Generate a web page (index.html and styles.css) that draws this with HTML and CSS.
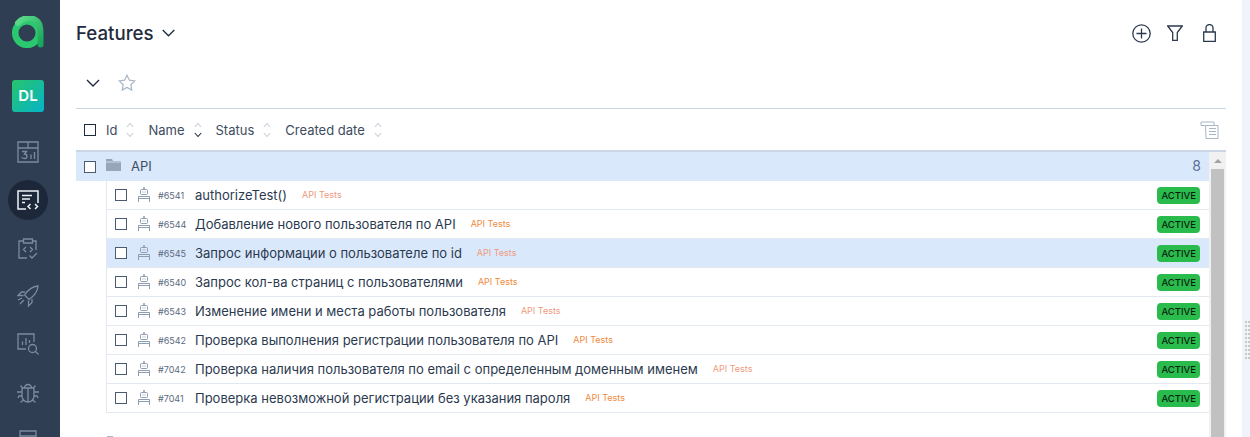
FILE: index.html
```html
<!DOCTYPE html>
<html lang="en">
<head>
    <meta charset="UTF-8">
    <title>Features</title>
    <link rel="stylesheet" href="styles.css">
</head>
<body>
    <svg class="defs" width="0" height="0">
        <symbol id="robot" viewBox="0 0 12 15">
            <circle cx="6" cy="1" r="1" fill="currentColor"/>
            <path d="M3.500 2.500h5a1 1 0 0 1 1 1v3a1 1 0 0 1-1 1h-5a1 1 0 0 1-1-1v-3a1 1 0 0 1 1-1zM4.500 5h1M6.500 5h1M.5 15v-5.500h11V15M.5 11.500h11" fill="none" stroke="currentColor"/>
        </symbol>
        <symbol id="sort" viewBox="0 0 8 20">
            <path d="M.8 7 4 3.500 7.200 7M.8 13 4 16.500 7.200 13" fill="none" stroke="currentColor" stroke-width="1.100"/>
        </symbol>
    </svg>

    <aside class="sidebar">
        <svg class="logo" width="32" height="32" viewBox="0 0 32 32">
            <defs>
                <linearGradient id="logoGrad" x1="0" y1="0" x2="1" y2="1">
                    <stop offset="0" stop-color="#5fdc8c"/>
                    <stop offset="1" stop-color="#17a65a"/>
                </linearGradient>
            </defs>
            <circle cx="15" cy="17" r="11.800" fill="none" stroke="#2bc96f" stroke-width="6.500"/>
            <path d="M6 7C10 2 19 0 25 5 29.500 9 28.500 18 28.500 28.500" fill="none" stroke="url(#logoGrad)" stroke-width="6" stroke-linecap="round"/>
        </svg>
        <div class="avatar">DL</div>
        <nav class="nav">
            <a class="nav-item">
                <svg width="22" height="22" viewBox="0 0 22 22" fill="none" stroke="currentColor" stroke-width="1.300">
                    <path d="M1 1h20v20H1zM1 7h20M11 1v6M5 10.500h4.500L7.500 13c1.800 0 2.500 1 2.500 2.200S9 17.500 7.500 17.500 5 16.800 4.500 16M14 13.500v4.500M17.500 11v7"/>
                </svg>
            </a>
            <a class="nav-item active">
                <svg width="22" height="20" viewBox="0 0 22 20" fill="none" stroke="currentColor" stroke-width="1.500">
                    <path d="M9 19H1V1h20v12M5 5.500h10M5 9h8M5 12.500h3M13.500 14l-2.500 2.500 2.500 2.500M18 14l2.500 2.500-2.500 2.500"/>
                </svg>
            </a>
            <a class="nav-item">
                <svg width="20" height="21" viewBox="0 0 20 21" fill="none" stroke="currentColor" stroke-width="1.300">
                    <path d="M5.500 3H1v17h8M14.500 3H18v9M5.500 1h9v4h-9zM8 9 5.500 11.500 8 14M12 9l2.500 2.500L12 14M11.500 17.500l2.500 2.500 5-5"/>
                </svg>
            </a>
            <a class="nav-item">
                <svg width="22" height="22" viewBox="0 0 22 22" fill="none" stroke="currentColor" stroke-width="1.300">
                    <path d="M21 1c-6 .5-9.500 3-13.500 9l4.500 4.500c6-4 8.500-7.500 9-13.500zM8 7H4.500L1 10.500h5.500M15 14v3.500L11.500 21v-5.500M1 15l4-2M3 19l4-4"/>
                </svg>
            </a>
            <a class="nav-item">
                <svg width="22" height="22" viewBox="0 0 22 22" fill="none" stroke="currentColor" stroke-width="1.300">
                    <path d="M9 16H1V1h16v8M5.500 12V8.500M9 12V5M12.500 10V7M18.500 18.500 21.500 21.500"/>
                    <circle cx="15.500" cy="15.500" r="4"/>
                </svg>
            </a>
            <a class="nav-item">
                <svg width="22" height="22" viewBox="0 0 22 22" fill="none" stroke="currentColor" stroke-width="1.300">
                    <path d="M6 7h10a1 1 0 0 1 1 1v7a6 6 0 0 1-12 0V8a1 1 0 0 1 1-1zM7.500 7a3.500 3.500 0 0 1 7 0M11 7v14M5 11H0M17 11h5M5 15H2l-1 2M17 15h3l1 2M6.500 19l-3 2.500M15.500 19l3 2.500M6 7.500 3.500 4.500M16 7.500l2.500-3"/>
                </svg>
            </a>
            <a class="nav-item">
                <svg width="18" height="20" viewBox="0 0 18 20" fill="none" stroke="currentColor" stroke-width="1.300">
                    <path d="M1 1h16v5H1zM1 6v13h16V6"/>
                </svg>
            </a>
        </nav>
    </aside>

    <main class="main">
        <header class="topbar">
            <h1 class="title">Features
                <svg width="13" height="8" viewBox="0 0 13 8"><path d="M.7 1l5.800 5.800L12.300 1" fill="none" stroke="#1f2b3d" stroke-width="1.300"/></svg>
            </h1>
            <div class="actions">
                <svg width="19" height="19" viewBox="0 0 19 19" fill="none" stroke="#2c3a4f" stroke-width="1.300">
                    <circle cx="9.500" cy="9.500" r="8.700"/><path d="M9.500 4.500v10M4.500 9.500h10"/>
                </svg>
                <svg width="16" height="16" viewBox="0 0 16 16" fill="none" stroke="#2c3a4f" stroke-width="1.300">
                    <path d="M.7 1h14.600l-5 6.500v7.800H5.700V7.500z"/>
                </svg>
                <svg class="lock" width="13" height="18" viewBox="0 0 13 18" fill="none" stroke="#2c3a4f" stroke-width="1.300">
                    <path d="M.7 8h11.600v9.300H.7zM3 8V4a3.500 3.500 0 0 1 7 0v4"/>
                </svg>
            </div>
        </header>

        <div class="toolbar">
            <svg width="14" height="8" viewBox="0 0 14 8"><path d="M1 1l6 6 6-6" fill="none" stroke="#1f2b3d" stroke-width="1.400"/></svg>
            <svg width="18" height="18" viewBox="0 0 18 18"><path d="M9 1.200l2.400 5 5.400.7-4 3.800 1 5.400L9 13.500l-4.800 2.600 1-5.400-4-3.800 5.400-.7z" fill="none" stroke="#a9b6c8" stroke-width="1.200"/></svg>
        </div>

        <div class="columns">
            <span class="check dark"></span>
            <span class="col first">Id <svg class="sort" width="8" height="20"><use href="#sort"/></svg></span>
            <span class="col">Name
                <svg class="sort" width="8" height="20" viewBox="0 0 8 20" fill="none" stroke-width="1.100">
                    <path d="M.8 7 4 3.500 7.200 7" stroke="currentColor"/>
                    <path d="M.8 13 4 16.500 7.200 13" stroke="#1f2b3d"/>
                </svg>
            </span>
            <span class="col">Status <svg class="sort" width="8" height="20"><use href="#sort"/></svg></span>
            <span class="col">Created date <svg class="sort" width="8" height="20"><use href="#sort"/></svg></span>
            <svg class="settings" width="19" height="18" viewBox="0 0 19 18" fill="none" stroke="#a9b6c8">
                <path d="M5.500 4.500H1V1h13v3M5.500 4.500h12.500V17.500H6zM9 7.500h7M9 10.500h7M9 13.500h7"/>
            </svg>
        </div>

        <div class="list">
            <div class="rows">
                <div class="group">
                    <span class="check"></span>
                    <svg class="folder" width="15" height="12" viewBox="0 0 15 12"><path d="M0 0h6l1 2h8v10H0z" fill="#98a6bc"/><path d="M0 3h15" stroke="#fff" stroke-width=".6"/></svg>
                    <span class="group-name">API</span>
                    <span class="count">8</span>
                </div>
                <div class="items">
                    <div class="row">
                        <span class="check"></span><svg class="robot" width="12" height="15"><use href="#robot"/></svg>
                        <span class="num">#6541</span><span class="name">authorizeTest()</span><span class="tag muted">API Tests</span>
                        <span class="badge">ACTIVE</span>
                    </div>
                    <div class="row">
                        <span class="check"></span><svg class="robot" width="12" height="15"><use href="#robot"/></svg>
                        <span class="num">#6544</span><span class="name">Добавление нового пользователя по API</span><span class="tag">API Tests</span>
                        <span class="badge">ACTIVE</span>
                    </div>
                    <div class="row selected">
                        <span class="check"></span><svg class="robot" width="12" height="15"><use href="#robot"/></svg>
                        <span class="num">#6545</span><span class="name">Запрос информации о пользователе по id</span><span class="tag muted">API Tests</span>
                        <span class="badge">ACTIVE</span>
                    </div>
                    <div class="row">
                        <span class="check"></span><svg class="robot" width="12" height="15"><use href="#robot"/></svg>
                        <span class="num">#6540</span><span class="name">Запрос кол-ва страниц с пользователями</span><span class="tag">API Tests</span>
                        <span class="badge">ACTIVE</span>
                    </div>
                    <div class="row">
                        <span class="check"></span><svg class="robot" width="12" height="15"><use href="#robot"/></svg>
                        <span class="num">#6543</span><span class="name">Изменение имени и места работы пользователя</span><span class="tag muted">API Tests</span>
                        <span class="badge">ACTIVE</span>
                    </div>
                    <div class="row">
                        <span class="check"></span><svg class="robot" width="12" height="15"><use href="#robot"/></svg>
                        <span class="num">#6542</span><span class="name">Проверка выполнения регистрации пользователя по API</span><span class="tag">API Tests</span>
                        <span class="badge">ACTIVE</span>
                    </div>
                    <div class="row">
                        <span class="check"></span><svg class="robot" width="12" height="15"><use href="#robot"/></svg>
                        <span class="num">#7042</span><span class="name">Проверка наличия пользователя по email с определенным доменным именем</span><span class="tag muted">API Tests</span>
                        <span class="badge">ACTIVE</span>
                    </div>
                    <div class="row">
                        <span class="check"></span><svg class="robot" width="12" height="15"><use href="#robot"/></svg>
                        <span class="num">#7041</span><span class="name">Проверка невозможной регистрации без указания пароля</span><span class="tag">API Tests</span>
                        <span class="badge">ACTIVE</span>
                    </div>
                </div>
                <div class="next"></div>
            </div>
            <div class="scrollbar">
                <div class="arrow"></div>
                <div class="thumb"></div>
            </div>
        </div>
    </main>

    <div class="strip">
        <div class="grip"></div>
    </div>
</body>
</html>
```

FILE: styles.css
```css
:root {
    --side: #2f3e52;
    --dark: #1f2b3d;
    --line: #e3e9f1;
    --blue: #dae8fc;
}

* {
    margin: 0;
    padding: 0;
    box-sizing: border-box;
}

html, body {
    height: 437px;
    overflow: hidden;
}

body {
    display: flex;
    font-family: Inter, "Noto Sans", sans-serif;
    color: var(--dark);
    background: white;
}

.defs {
    position: absolute;
}

.sidebar {
    width: 60px;
    flex: none;
    background: var(--side);
    display: flex;
    flex-direction: column;
    align-items: center;
    padding: 16px 4px 0 0;
    overflow: hidden;
}

.logo {
    flex: none;
}

.avatar {
    width: 32px;
    height: 32px;
    flex: none;
    margin-top: 32px;
    border-radius: 3px;
    background: linear-gradient(135deg, #27c46b 0%, #06b4c8 100%);
    color: white;
    font-weight: 600;
    font-size: 15px;
    line-height: 32px;
    text-align: center;
}

.nav {
    display: flex;
    flex-direction: column;
    align-items: center;
    flex: none;
    margin-top: 20px;
}

.nav-item {
    width: 40px;
    height: 40px;
    margin-bottom: 8px;
    display: flex;
    align-items: center;
    justify-content: center;
    color: #7d8ba0;
}

.nav-item.active {
    background: #1c2839;
    border-radius: 50%;
    color: #eef2f6;
}

.main {
    width: 1182px;
    flex: none;
    padding: 0 16px;
}

.topbar {
    height: 66px;
    display: flex;
    align-items: center;
    justify-content: space-between;
    padding-right: 10px;
}

.title {
    font-size: 18.700px;
    font-weight: 500;
    display: flex;
    align-items: center;
    gap: 8px;
}

.actions {
    display: flex;
    align-items: center;
    gap: 16px;
}

.lock {
    margin-left: 4px;
}

.toolbar {
    height: 43px;
    display: flex;
    align-items: center;
    gap: 18px;
    padding: 0 0 8px 10px;
    border-bottom: 1px solid #cbd6e4;
}

.columns {
    height: 43px;
    display: flex;
    align-items: center;
    padding-left: 8px;
    font-size: 13px;
    color: #3e4c60;
    border-bottom: 2px solid #cbd6e4;
}

.col {
    display: flex;
    align-items: center;
    gap: 9px;
    margin-right: 14px;
}

.col.first {
    margin-left: 10px;
}

.sort {
    color: #c6ced9;
}

.settings {
    margin-left: auto;
    margin-right: 7px;
}

.check {
    width: 12px;
    height: 12px;
    flex: none;
    border: 1px solid #4a5a70;
    background: white;
}

.check.dark {
    border-color: var(--dark);
}

.list {
    display: flex;
    height: 286px;
}

.rows {
    flex: 1;
}

.group {
    height: 29px;
    display: flex;
    align-items: center;
    padding: 0 9px 2px 8px;
    background: var(--blue);
    font-size: 13px;
    color: #3e4c60;
}

.group .check {
    margin-top: 2px;
}

.folder {
    margin: 0 10px 1px 10px;
}

.count {
    margin-left: auto;
    margin-right: -1px;
    font-size: 14px;
    color: #5a7296;
}

.items {
    margin-left: 30px;
    border-left: 1px solid var(--line);
}

.row {
    height: 29px;
    display: flex;
    align-items: center;
    padding: 0 9px 0 8px;
    border-bottom: 1px solid var(--line);
}

.row.selected {
    background: var(--blue);
}

.robot {
    margin: 0 0 2px 11px;
    color: #8f9db1;
}

.num {
    width: 37px;
    flex: none;
    font-size: 9px;
    color: #5c6a7e;
    margin-left: 8px;
}

.name {
    font-size: 13px;
    color: #2c3a4f;
}

.tag {
    font-size: 9px;
    color: #f08a3c;
    margin: 0 0 2px 15px;
}

.tag.muted {
    color: #ee9a80;
}

.badge {
    margin-left: auto;
    height: 17px;
    padding: 0 4px;
    border-radius: 4px;
    background: #29bb4c;
    color: #0b1d10;
    font-size: 9.500px;
    font-weight: 500;
    line-height: 17px;
}

.next {
    width: 6px;
    height: 1px;
    margin: 23px 0 0 31px;
    background: #a9b6c8;
}

.scrollbar {
    width: 17px;
    flex: none;
    background: #f1f1f1;
    padding: 0 2px;
}

.arrow {
    width: 0;
    margin: 7px auto 6px;
    border: 4px solid transparent;
    border-top: 0;
    border-bottom: 4px solid #a3a3a3;
}

.thumb {
    height: 268px;
    background: #c1c1c1;
}

.strip {
    flex: 1;
    background: #f0f4fa;
    padding-top: 321px;
    display: flex;
    justify-content: flex-end;
}

.grip {
    width: 5px;
    height: 38px;
    background: conic-gradient(at 2px 2px, transparent 75%, #c8c8c8 0) 0 0 / 3px 4px;
}
```
